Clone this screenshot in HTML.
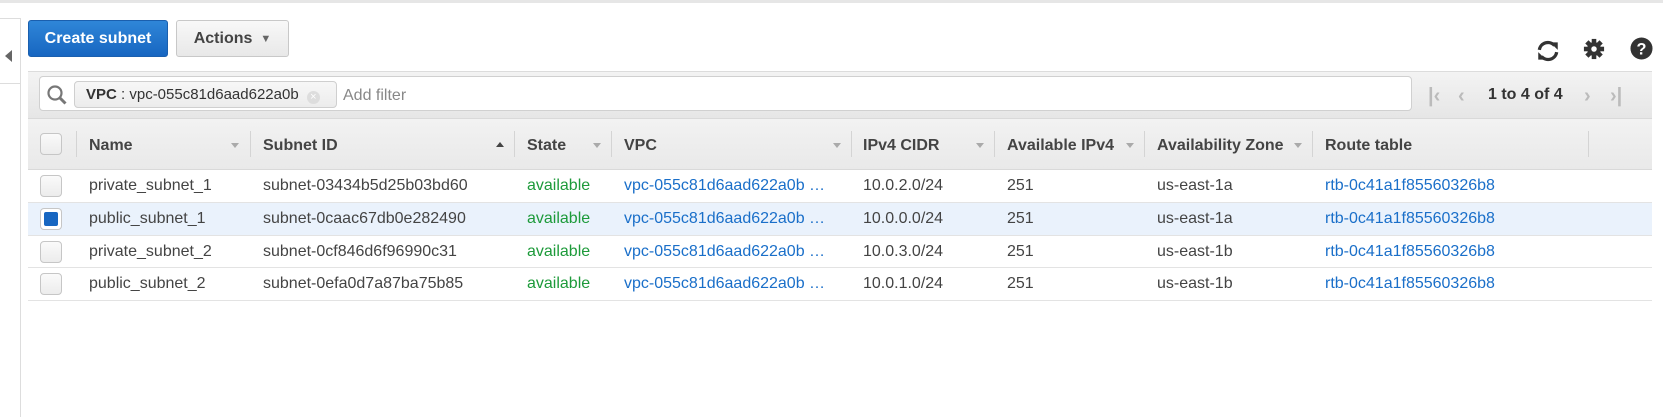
<!DOCTYPE html>
<html><head><style>
*{box-sizing:border-box;margin:0;padding:0}
body{width:1663px;height:417px;background:#fff;font-family:"Liberation Sans",Arial,sans-serif;position:relative;overflow:hidden;color:#444}
.a{position:absolute}
.btn{position:absolute;border-radius:3px;font-weight:bold;font-size:16px;display:flex;align-items:center;justify-content:center}
.cb{position:absolute;width:22px;height:22px;border:1px solid #c6c6c6;border-radius:4px;background:linear-gradient(#fafafa,#ececec)}
.hd{position:absolute;top:120px;height:52px;font-weight:bold;font-size:16px;color:#444;line-height:52px}
.sep{position:absolute;top:131px;width:1px;height:26px;background:#d4d4d4}
.tri{position:absolute;top:143px;width:0;height:0;border-left:4px solid transparent;border-right:4px solid transparent;border-top:5px solid #aaa}
.row{position:absolute;left:28px;width:1624px;border-bottom:1px solid #e3e3e3;font-size:16px}
.row span{position:absolute;top:50%;transform:translateY(-50%);white-space:nowrap}
.l{color:#1a6fc9}.g{color:#1d9a3a}
.pg{position:absolute;top:84px;font-size:20px;color:#bbb;line-height:24px;font-weight:bold}
</style></head><body>
<div class="a" style="left:0;top:0;width:1663px;height:3px;background:#e6e6e6"></div>
<div class="a" style="left:0;top:18px;width:21px;height:1px;background:#ddd"></div>
<div class="a" style="left:20px;top:18px;width:1px;height:399px;background:#ddd"></div>
<div class="a" style="left:0;top:83px;width:21px;height:1px;background:#ddd"></div>
<div class="a" style="left:5px;top:50px;width:0;height:0;border-top:6px solid transparent;border-bottom:6px solid transparent;border-right:7px solid #666"></div>

<div class="btn" style="left:28px;top:20px;width:140px;height:37px;background:linear-gradient(#2f86d8,#1766c1);border:1px solid #1a5fae;color:#fff">Create subnet</div>
<div class="btn" style="left:176px;top:20px;width:113px;height:37px;background:linear-gradient(#f8f8f8,#e8e8e8);border:1px solid #c8c8c8;color:#444">Actions <span style="font-size:11px;margin-left:8px;color:#666">&#9660;</span></div>

<svg class="a" style="left:1535px;top:38px" width="26" height="26" viewBox="0 0 24 24"><path d="M4 11a8 8 0 0 1 14-4" fill="none" stroke="#333" stroke-width="3"/><path d="M20 13a8 8 0 0 1-14 4" fill="none" stroke="#333" stroke-width="3"/><path d="M14 4h7v7z" fill="#333"/><path d="M10 20H3v-7z" fill="#333"/></svg>
<svg class="a" style="left:1583px;top:38px" width="22" height="22" viewBox="0 0 24 24"><g fill="#333"><circle cx="12" cy="12" r="7.5"/><rect x="9.5" y="1" width="5" height="22"/><rect x="1" y="9.5" width="22" height="5"/><rect x="9.5" y="1" width="5" height="22" transform="rotate(45 12 12)"/><rect x="9.5" y="1" width="5" height="22" transform="rotate(-45 12 12)"/></g><circle cx="12" cy="12" r="3" fill="#fff"/></svg>
<svg class="a" style="left:1630px;top:37px" width="23" height="23" viewBox="0 0 24 24"><circle cx="12" cy="12" r="11.5" fill="#333"/><text x="12" y="18" text-anchor="middle" font-family="Liberation Sans" font-weight="bold" font-size="17" fill="#fff">?</text></svg>

<div class="a" style="left:28px;top:71px;width:1624px;height:47px;background:linear-gradient(#f3f3f3,#e6e6e6);border-top:1px solid #dcdcdc"></div>
<div class="a" style="left:39px;top:76px;width:1373px;height:35px;background:#fff;border:1px solid #d0d0d0;border-radius:4px"></div>
<svg class="a" style="left:46px;top:84px" width="22" height="22" viewBox="0 0 22 22"><circle cx="9" cy="9" r="6.5" fill="none" stroke="#777" stroke-width="2.2"/><path d="M13.5 13.5l6 6" stroke="#777" stroke-width="3"/></svg>
<div class="a" style="left:74px;top:81px;width:263px;height:27px;background:linear-gradient(#f7f7f7,#ececec);border:1px solid #cfcfcf;border-radius:4px;font-size:15px;line-height:25px;padding-left:11px;color:#333"><b>VPC</b> : vpc-055c81d6aad622a0b <span style="display:inline-block;width:13px;height:13px;border-radius:50%;background:#ddd;vertical-align:-1px;margin-left:4px;color:#fff;font-size:11px;line-height:13px;text-align:center">×</span></div>
<div class="a" style="left:343px;top:86px;font-size:16px;color:#888;line-height:20px">Add filter</div>
<div class="pg" style="left:1428px">|&lsaquo;</div>
<div class="pg" style="left:1458px">&lsaquo;</div>
<div class="a" style="left:1488px;top:86px;font-size:16px;font-weight:bold;color:#333">1 to 4 of 4</div>
<div class="pg" style="left:1584px">&rsaquo;</div>
<div class="pg" style="left:1610px">&rsaquo;|</div>

<div class="a" style="left:28px;top:118px;width:1624px;height:52px;background:linear-gradient(#f2f2f2,#e9e9e9);border-top:1px solid #d9d9d9;border-bottom:1px solid #d9d9d9"></div>
<div class="cb" style="left:40px;top:133px"></div>
<div class="sep" style="left:76px"></div>
<div class="hd" style="left:89px">Name</div><div class="tri" style="left:231px"></div>
<div class="sep" style="left:250px"></div>
<div class="hd" style="left:263px">Subnet ID</div><div class="a" style="left:496px;top:142px;border-left:4px solid transparent;border-right:4px solid transparent;border-bottom:5px solid #444"></div>
<div class="sep" style="left:514px"></div>
<div class="hd" style="left:527px">State</div><div class="tri" style="left:593px"></div>
<div class="sep" style="left:611px"></div>
<div class="hd" style="left:624px">VPC</div><div class="tri" style="left:833px"></div>
<div class="sep" style="left:851px"></div>
<div class="hd" style="left:863px">IPv4 CIDR</div><div class="tri" style="left:976px"></div>
<div class="sep" style="left:994px"></div>
<div class="hd" style="left:1007px">Available IPv4</div><div class="tri" style="left:1126px"></div>
<div class="sep" style="left:1144px"></div>
<div class="hd" style="left:1157px">Availability Zone</div><div class="tri" style="left:1294px"></div>
<div class="sep" style="left:1312px"></div>
<div class="hd" style="left:1325px">Route table</div>
<div class="sep" style="left:1588px"></div>

<div class="row" style="top:170px;height:33px">
<div class="cb" style="left:12px;top:5px"></div>
<span style="left:61px">private_subnet_1</span><span style="left:235px">subnet-03434b5d25b03bd60</span><span class="g" style="left:499px">available</span><span class="l" style="left:596px">vpc-055c81d6aad622a0b …</span><span style="left:835px">10.0.2.0/24</span><span style="left:979px">251</span><span style="left:1129px">us-east-1a</span><span class="l" style="left:1297px">rtb-0c41a1f85560326b8</span></div>
<div class="row" style="top:203px;height:33px;background:#eaf2fc">
<div class="cb" style="left:12px;top:5px;background:#fff"><div style="position:absolute;left:3px;top:3px;width:14px;height:14px;border-radius:2px;background:#1766c1"></div></div>
<span style="left:61px">public_subnet_1</span><span style="left:235px">subnet-0caac67db0e282490</span><span class="g" style="left:499px">available</span><span class="l" style="left:596px">vpc-055c81d6aad622a0b …</span><span style="left:835px">10.0.0.0/24</span><span style="left:979px">251</span><span style="left:1129px">us-east-1a</span><span class="l" style="left:1297px">rtb-0c41a1f85560326b8</span></div>
<div class="row" style="top:236px;height:32px">
<div class="cb" style="left:12px;top:5px"></div>
<span style="left:61px">private_subnet_2</span><span style="left:235px">subnet-0cf846d6f96990c31</span><span class="g" style="left:499px">available</span><span class="l" style="left:596px">vpc-055c81d6aad622a0b …</span><span style="left:835px">10.0.3.0/24</span><span style="left:979px">251</span><span style="left:1129px">us-east-1b</span><span class="l" style="left:1297px">rtb-0c41a1f85560326b8</span></div>
<div class="row" style="top:268px;height:33px">
<div class="cb" style="left:12px;top:5px"></div>
<span style="left:61px">public_subnet_2</span><span style="left:235px">subnet-0efa0d7a87ba75b85</span><span class="g" style="left:499px">available</span><span class="l" style="left:596px">vpc-055c81d6aad622a0b …</span><span style="left:835px">10.0.1.0/24</span><span style="left:979px">251</span><span style="left:1129px">us-east-1b</span><span class="l" style="left:1297px">rtb-0c41a1f85560326b8</span></div>
</body></html>
